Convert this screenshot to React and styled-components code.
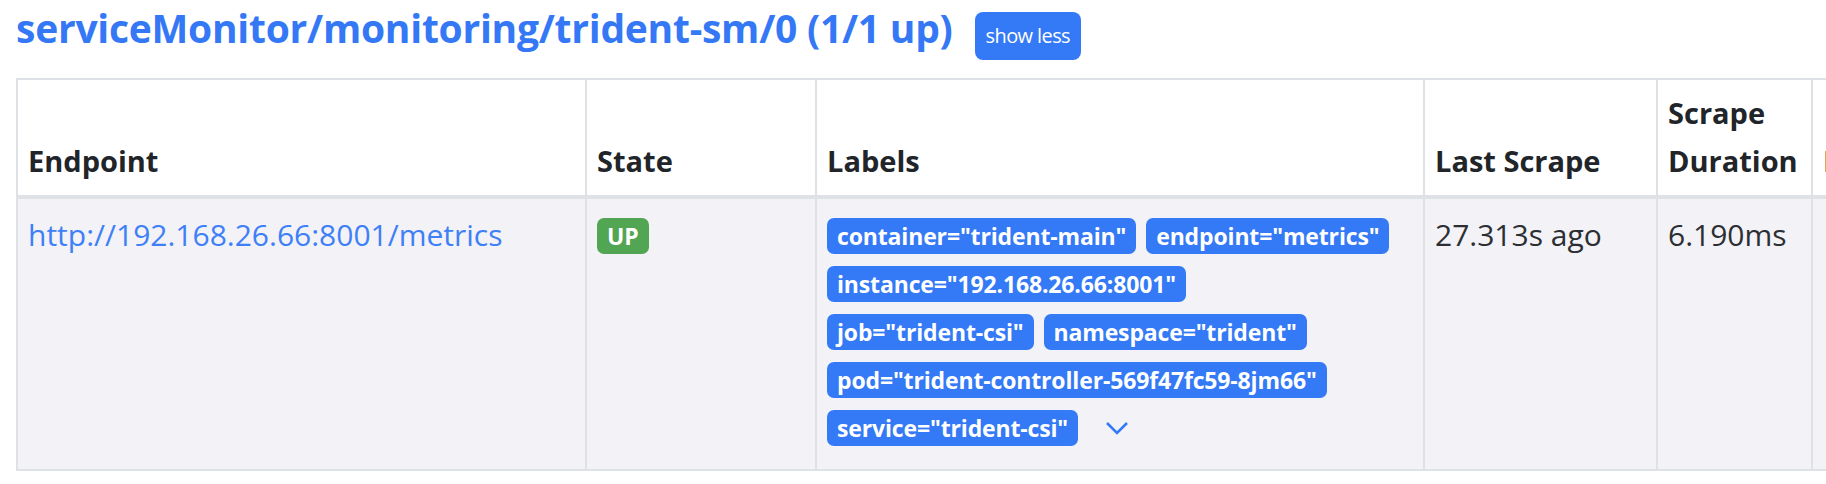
import styled, { createGlobalStyle } from "styled-components";

const GlobalStyle = createGlobalStyle`
  body {
    margin: 0;
    background: #fff;
    font-family: "Open Sans", "Noto Sans", sans-serif;
    color: #212529;
    overflow: hidden;
  }
`;

const Page = styled.div`
  padding: 4px 0 0 16px;
  width: 2400px;
`;

const Header = styled.div`
  display: flex;
  align-items: baseline;
  gap: 22px;
  margin-bottom: 18px;
`;

const Title = styled.h2`
  margin: 0;
  font-size: 39px;
  line-height: 48px;
  font-weight: 700;
  color: #3478f6;
  letter-spacing: -0.25px;
`;

const ShowButton = styled.button`
  font-family: inherit;
  font-size: 20px;
  line-height: 30px;
  padding: 9px 11px;
  border: 0;
  border-radius: 8px;
  background: #3479f6;
  color: #fff;
  letter-spacing: -0.6px;
`;

const Table = styled.table`
  border-collapse: collapse;
  table-layout: fixed;
  border: 2px solid #dee2e6;
`;

const Col = styled.col`
  width: ${(p) => p.$w}px;
`;

const Th = styled.th`
  text-align: left;
  vertical-align: bottom;
  font-size: 29px;
  line-height: 48px;
  font-weight: 700;
  padding: 9px 10px 10px;
  border: 2px solid #dee2e6;
  border-bottom-width: 4px;
  background: #fff;
`;

const Row = styled.tr`
  background: #f3f2f6;
`;

const Td = styled.td`
  vertical-align: top;
  font-size: 30px;
  line-height: 48px;
  padding: 12px 10px 13px;
  border: 2px solid #dee2e6;
  color: #2b2f33;
`;

const Link = styled.a`
  color: #3e80f7;
  text-decoration: none;
`;

const Badges = styled.div`
  display: flex;
  flex-wrap: wrap;
  align-items: center;
  gap: 12px 10px;
  padding: 7px 0 10px;
  max-width: 568px;
`;

const Badge = styled.span`
  display: inline-block;
  font-size: 23px;
  line-height: 24px;
  font-weight: 700;
  padding: 6px 10px;
  border-radius: 7px;
  color: #fff;
  letter-spacing: -0.15px;
  background: ${(p) => (p.$tone === "success" ? "#52a552" : "#3479f6")};
`;

const Toggle = styled.button`
  border: 0;
  background: transparent;
  padding: 0 6px;
  margin-left: 11px;
  display: flex;
  align-items: center;
`;

const columns = [
  { title: "Endpoint", w: 569 },
  { title: "State", w: 230 },
  { title: "Labels", w: 608 },
  { title: "Last Scrape", w: 233 },
  { title: "Scrape Duration", w: 155 },
  { title: "Error", w: 300 },
];

const labels = [
  'container="trident-main"',
  'endpoint="metrics"',
  'instance="192.168.26.66:8001"',
  'job="trident-csi"',
  'namespace="trident"',
  'pod="trident-controller-569f47fc59-8jm66"',
  'service="trident-csi"',
];

export default function App() {
  return (
    <Page>
      <GlobalStyle />
      <Header>
        <Title>serviceMonitor/monitoring/trident-sm/0 (1/1 up)</Title>
        <ShowButton>show less</ShowButton>
      </Header>
      <Table>
        <colgroup>
          {columns.map((c) => (
            <Col key={c.title} $w={c.w} />
          ))}
        </colgroup>
        <thead>
          <tr>
            {columns.map((c) => (
              <Th key={c.title}>{c.title}</Th>
            ))}
          </tr>
        </thead>
        <tbody>
          <Row>
            <Td>
              <Link href="#">http://192.168.26.66:8001/metrics</Link>
            </Td>
            <Td>
              <Badges>
                <Badge $tone="success">UP</Badge>
              </Badges>
            </Td>
            <Td>
              <Badges>
                {labels.map((l) => (
                  <Badge key={l}>{l}</Badge>
                ))}
                <Toggle>
                  <svg width="24" height="14" viewBox="0 0 24 14">
                    <polyline points="2,2 12,12 22,2" fill="none" stroke="#3479f6" strokeWidth="2.6" />
                  </svg>
                </Toggle>
              </Badges>
            </Td>
            <Td>27.313s ago</Td>
            <Td>6.190ms</Td>
            <Td />
          </Row>
        </tbody>
      </Table>
    </Page>
  );
}
